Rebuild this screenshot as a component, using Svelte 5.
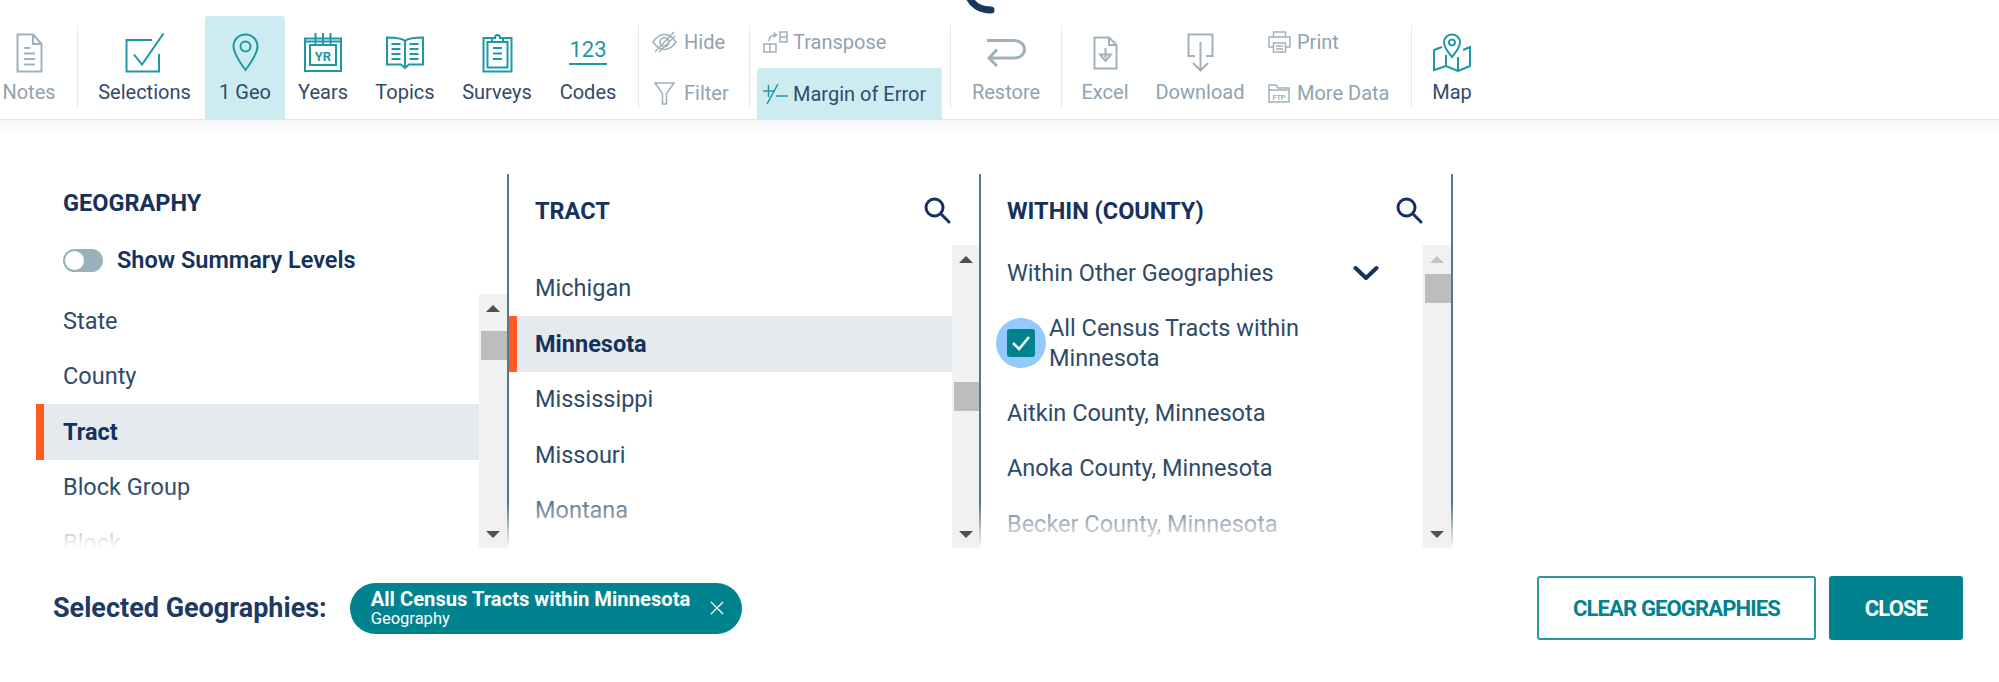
<script>
  const col1 = [
    { t: 'State' }, { t: 'County' }, { t: 'Tract', on: true }, { t: 'Block Group' }, { t: 'Block' }
  ];
  const col2 = [
    { t: 'Michigan' }, { t: 'Minnesota', on: true }, { t: 'Mississippi' }, { t: 'Missouri' }, { t: 'Montana' }
  ];
  const col3 = ['Aitkin County, Minnesota', 'Anoka County, Minnesota', 'Becker County, Minnesota'];
</script>

{#snippet scrollbar(offset, w, dim)}
  <div class="sb" style="width:{w}px">
    <span class="up" class:dim></span>
    <span class="thumb" style="margin-top:{offset}px"></span>
    <span class="down"></span>
  </div>
{/snippet}

{#snippet search()}
  <svg class="search" width="28" height="28" viewBox="0 0 28 28"><circle cx="11.5" cy="11.5" r="8.5"/><path d="M17.8 17.8 L26 26"/></svg>
{/snippet}

<svg class="arc" width="40" height="16" viewBox="0 0 40 16"><path d="M5 -3C8 4 15 10 27 10"/></svg>

<header class="bar">
  <div class="tool off notes">
    <span class="slot"><svg width="27" height="40" viewBox="0 0 27 40"><path d="M1.5 1.5H17L25.5 11V38.5H1.5ZM17 1.5V11H25.5M8 15H14M8 20.5H19M8 26H19M8 31.5H19"/></svg></span>
    <span class="lb">Notes</span>
  </div>
  <i class="sep first"></i>
  <div class="tool sel">
    <span class="slot"><svg width="40" height="40" viewBox="0 0 40 40"><path d="M27 7H1.5V38.5H34V21M9 21.5L17 31.5L38.5 0.5"/></svg></span>
    <span class="lb">Selections</span>
  </div>
  <div class="tool geo">
    <span class="slot"><svg width="27" height="39" viewBox="0 0 27 39"><path d="M13.5 1.5C6.5 1.5 1.5 7 1.5 13.5C1.5 21.5 13.5 37 13.5 37S25.5 21.5 25.5 13.5C25.5 7 20.5 1.5 13.5 1.5Z"/><circle cx="13.5" cy="13.5" r="5"/></svg></span>
    <span class="lb">1 Geo</span>
  </div>
  <div class="tool years">
    <span class="slot"><svg width="38" height="39" viewBox="0 0 38 39"><path d="M1 5.5H37V38H1ZM6 12H32V32H6ZM11.5 0V11M19 0V11M26.5 0V11M1 8.5H37"/><text x="19" y="27.5" text-anchor="middle">YR</text></svg></span>
    <span class="lb">Years</span>
  </div>
  <div class="tool topics">
    <span class="slot"><svg width="38" height="35" viewBox="0 0 38 35"><path d="M19 6C15 2.5 8 2.5 1 2.5V29.5H15L19 33L23 29.5H37V2.5C30 2.5 23 2.5 19 6ZM19 6V33M5.5 9H14.5M5.5 14H14.5M5.5 19H14.5M5.5 24H14.5M23.5 9H32.5M23.5 14H32.5M23.5 19H32.5M23.5 24H32.5"/></svg></span>
    <span class="lb">Topics</span>
  </div>
  <div class="tool surveys">
    <span class="slot"><svg width="31" height="40" viewBox="0 0 31 40"><path d="M10 5H1.5V38.5H29.5V5H21M5.5 9H25.5V34.5H5.5ZM10 9V5H13C13 1 18 1 18 5H21V9M11 15H20M11 20.5H20M11 26H20"/></svg></span>
    <span class="lb">Surveys</span>
  </div>
  <div class="tool codes">
    <span class="slot"><span class="num">123</span></span>
    <span class="lb">Codes</span>
  </div>
  <i class="sep s2"></i>
  <div class="stack st1">
    <div class="row off">
      <span class="ic"><svg width="25" height="22" viewBox="0 0 25 22"><path d="M1 11C5 5 9 3.5 12.5 3.5S20 5 24 11C20 17 16 18.5 12.5 18.5S5 17 1 11ZM12.5 6.5A4.5 4.5 0 1 1 12.4 6.5M3 21L22 1M7 21L23 5"/></svg></span>
      <span>Hide</span>
    </div>
    <div class="row off">
      <span class="ic"><svg width="21" height="23" viewBox="0 0 21 23"><path d="M1 1H20L12.5 11.5V22H8.5V11.5Z"/></svg></span>
      <span>Filter</span>
    </div>
  </div>
  <i class="sep"></i>
  <div class="stack st2">
    <div class="row off">
      <span class="ic"><svg width="25" height="22" viewBox="0 0 25 22"><path d="M1 13H13V21H1ZM7 13V21M17 1H24V11H17ZM17 6H24M6 10C6 6 8 4 13 4M10.5 1.5L13.5 4L10.5 6.5"/></svg></span>
      <span>Transpose</span>
    </div>
    <div class="row on">
      <span class="ic"><svg class="moe" width="25" height="20" viewBox="0 0 25 20"><path d="M0 7H11M5.5 1V13M4 20L15 0M13 12H25"/></svg></span>
      <span>Margin of Error</span>
    </div>
  </div>
  <i class="sep s3"></i>
  <div class="tool off restore">
    <span class="slot"><svg width="40" height="29" viewBox="0 0 40 29"><path class="thick" d="M1 2.5H28C34 2.5 38.5 6.5 38.5 11.5S34 20 28 20H4M11 11.5L3 20L11 28"/></svg></span>
    <span class="lb">Restore</span>
  </div>
  <i class="sep"></i>
  <div class="tool off excel">
    <span class="slot"><svg width="25" height="34" viewBox="0 0 25 34"><path d="M1.5 1.5H16L23.5 9V32.5H1.5ZM16 1.5V9H23.5M12.5 12V22M7 18.5H18L12.5 25Z"/></svg></span>
    <span class="lb">Excel</span>
  </div>
  <div class="tool off download">
    <span class="slot"><svg width="27" height="39" viewBox="0 0 27 39"><path d="M8 23H1.5V1.5H25.5V23H19M13.5 9V37.5M6 30L13.5 37.5L21 30"/></svg></span>
    <span class="lb">Download</span>
  </div>
  <div class="stack st3">
    <div class="row off">
      <span class="ic"><svg width="23" height="22" viewBox="0 0 23 22"><path d="M5.5 6V1H17.5V6M5.5 16H1V6H22V16H17.5M5.5 12H17.5V21H5.5ZM8 15H15M8 18H15"/></svg></span>
      <span>Print</span>
    </div>
    <div class="row off">
      <span class="ic"><svg width="22" height="19" viewBox="0 0 22 19"><path d="M1 18V1H8L10 4H21V18ZM1 6H21"/><text x="11" y="15.5" text-anchor="middle" class="ftp">FTP</text></svg></span>
      <span>More Data</span>
    </div>
  </div>
  <i class="sep"></i>
  <div class="tool map">
    <span class="slot"><svg width="38" height="39" viewBox="0 0 38 39"><path d="M19 1.5C14.5 1.5 11 5 11 9.5C11 14.5 19 24 19 24S27 14.5 27 9.5C27 5 23.5 1.5 19 1.5ZM19 6.5A3 3 0 1 1 18.9 6.5M9 14L1 17V37L13 33L25 38L37 33V14L30 17M13 22V33M25 24V38"/></svg></span>
    <span class="lb">Map</span>
  </div>
</header>
<div class="shade"></div>

<main class="cols">
  <section class="col c1">
    <div class="head1">
      <h2>GEOGRAPHY</h2>
      <div class="toggle"><span class="switch"><span class="knob"></span></span><b>Show Summary Levels</b></div>
    </div>
    <div class="listwrap">
      <div class="list">
        <ul class="shift">
          {#each col1 as r}<li class:on={r.on}>{r.t}</li>{/each}
        </ul>
        <span class="fade"></span>
      </div>
      {@render scrollbar(19, 28, false)}
    </div>
  </section>
  <section class="col c2">
    <div class="head2"><h2>TRACT</h2>{@render search()}</div>
    <div class="listwrap">
      <div class="list">
        <ul class="pad">
          {#each col2 as r}<li class:on={r.on}>{r.t}</li>{/each}
        </ul>
        <span class="fade"></span>
      </div>
      {@render scrollbar(119, 27, false)}
    </div>
  </section>
  <section class="col c3">
    <div class="head2"><h2>WITHIN (COUNTY)</h2>{@render search()}</div>
    <div class="listwrap">
      <div class="list">
        <ul>
          <li class="within"><span>Within Other Geographies</span><svg width="26" height="16" viewBox="0 0 26 16"><path d="M2.5 3L13 13L23.5 3"/></svg></li>
          <li class="check"><span class="ring"><span class="box"><svg width="20" height="16" viewBox="0 0 20 16"><path d="M2 8L8 14L18 2"/></svg></span></span><span class="cl">All Census Tracts within Minnesota</span></li>
          {#each col3 as t}<li>{t}</li>{/each}
        </ul>
        <span class="fade"></span>
      </div>
      {@render scrollbar(11, 28, true)}
    </div>
  </section>
</main>

<footer class="foot">
  <div class="selected">
    <strong>Selected Geographies:</strong>
    <div class="chip">
      <div class="ct"><b>All Census Tracts within Minnesota</b><small>Geography</small></div>
      <svg width="14" height="14" viewBox="0 0 14 14"><path d="M1 1L13 13M13 1L1 13"/></svg>
    </div>
  </div>
  <div class="btns">
    <button class="ghost">CLEAR GEOGRAPHIES</button>
    <button class="solid">CLOSE</button>
  </div>
</footer>

<style>
  :global(body) { margin: 0; background: #fff; font-family: Roboto, "Liberation Sans", sans-serif; overflow: hidden; }
  .arc { position: absolute; left: 964px; top: 0; fill: none; stroke: #17375e; stroke-width: 7; stroke-linecap: round; }
  .bar { display: flex; height: 119px; border-bottom: 1px solid #dfe7ec; color: #33496b; font-size: 20px; }
  .bar svg { fill: none; stroke: #1f98a5; stroke-width: 2; display: block; }
  .bar .off svg { stroke: #9fb1bb; }
  .bar .row svg { stroke-width: 1.5; }
  .sep { width: 1px; height: 84px; margin-top: 25px; background: #e5ebee; flex: none; }
  .sep.first { margin-left: 19px; }
  .sep.s2 { margin-left: 7px; }
  .sep.s3 { margin-left: 8px; }
  .tool { flex: none; display: flex; flex-direction: column; align-items: center; padding-top: 33px; box-sizing: border-box; }
  .slot { height: 39px; display: flex; align-items: center; justify-content: center; margin-bottom: 9px; }
  .lb { line-height: 22px; white-space: nowrap; }
  .off { color: #8fa3b0; }
  .notes { width: 58px; }
  .sel { width: 127px; padding-left: 6px; }
  .geo { width: 80px; background: #cdecf2; margin-top: 16px; padding-top: 17px; border-radius: 3px 3px 0 0; }
  .years { width: 76px; }
  .years text { font: 700 13px Roboto, sans-serif; fill: #1f98a5; stroke: none; }
  .topics { width: 88px; }
  .surveys { width: 96px; }
  .codes { width: 86px; }
  .num { color: #1f98a5; font-size: 22px; line-height: 20px; font-weight: 400; border-bottom: 2px solid #1f98a5; padding-bottom: 3px; }
  .stack { flex: none; padding-top: 16px; box-sizing: border-box; }
  .st1 { width: 110px; padding-left: 13px; }
  .st2 { width: 185px; margin-left: 7px; }
  .st3 { width: 159px; padding-left: 16px; }
  .row { height: 51.5px; display: flex; align-items: center; gap: 7px; white-space: nowrap; }
  .st2 .row { padding-left: 6px; gap: 5px; }
  .st3 .row { gap: 6px; }
  .row.on { background: #cdecf2; border-radius: 3px 3px 0 0; height: 52px; }
  .ic { width: 25px; display: flex; justify-content: center; flex: none; }
  .st3 .ic { width: 23px; justify-content: flex-start; }
  .moe { stroke: #1f98a5; }
  .ftp { font: 700 7px Roboto, sans-serif; fill: #9fb1bb; stroke: none; }
  .restore { width: 110px; }
  .bar .thick { stroke-width: 3; }
  .excel { width: 86px; }
  .download { width: 104px; }
  .map { width: 80px; }
  .shade { height: 14px; background: linear-gradient(#f4f5f6, #fff); }

  .cols { display: flex; height: 374px; margin-top: 40px; color: #2e4a69; font-size: 23.5px; }
  .col { flex: none; height: 374px; display: flex; flex-direction: column; box-sizing: border-box; border-right: 2px solid; border-image: linear-gradient(#5b7686 88%, #fff) 1; }
  .c1 { width: 509px; padding-left: 36px; }
  .c2 { width: 472px; }
  .c3 { width: 472px; }
  h2 { margin: 0; font-size: 23.5px; line-height: 24px; font-weight: 700; color: #16325c; }
  .head1 { height: 120px; flex: none; padding: 17px 0 0 27px; box-sizing: border-box; }
  .head2 { height: 71px; flex: none; display: flex; justify-content: space-between; align-items: center; padding: 2px 28px 0 26px; box-sizing: border-box; }
  .head2 .search { margin-top: -2px; }
  .toggle { display: flex; align-items: center; gap: 14px; margin-top: 33px; color: #16325c; font-size: 23.5px; line-height: 24px; }
  .toggle b { font-weight: 600; }
  .switch { width: 40px; height: 23px; border-radius: 12px; background: #9ab0bd; display: block; position: relative; }
  .knob { position: absolute; left: 2px; top: 2px; width: 19px; height: 19px; border-radius: 50%; background: #fff; }
  .search { fill: none; stroke: #16325c; stroke-width: 3; stroke-linecap: round; }
  .listwrap { flex: 1; min-height: 0; display: flex; }
  .list { flex: 1; min-width: 0; position: relative; overflow: hidden; }
  ul { list-style: none; margin: 0; padding: 0; }
  .shift { margin-top: -1px; }
  .pad { padding-top: 15.5px; }
  li { height: 55.5px; display: flex; align-items: center; padding-left: 26px; box-sizing: border-box; white-space: nowrap; }
  .c1 li { padding-left: 27px; }
  li.on { background: #e5eaee; box-shadow: inset 8px 0 0 #ff5a1f; color: #16325c; font-weight: 700; }
  .fade { position: absolute; left: 0; right: 0; bottom: 0; height: 60px; background: linear-gradient(rgba(255,255,255,0), #fff); }
  .within { justify-content: space-between; height: 56px; padding-right: 44px; }
  .within svg { fill: none; stroke: #16325c; stroke-width: 4; stroke-linecap: round; stroke-linejoin: round; }
  .check { height: 84px; white-space: normal; gap: 3px; padding-left: 15px; }
  .ring { width: 50px; height: 50px; border-radius: 50%; background: #93c9fb; flex: none; display: flex; align-items: center; justify-content: center; }
  .box { width: 28px; height: 28px; background: #00838f; border-radius: 3px; display: flex; align-items: center; justify-content: center; }
  .box svg { fill: none; stroke: #fff; stroke-width: 2.6; }
  .cl { width: 270px; line-height: 30px; }
  .sb { flex: none; background: #f1f1f1; display: flex; flex-direction: column; align-items: center; }
  .thumb { display: block; height: 29px; width: calc(100% - 2px); margin-left: 2px; background: #bdbdbd; }
  .up, .down { display: block; width: 0; height: 0; border-left: 7px solid transparent; border-right: 7px solid transparent; }
  .up { border-bottom: 7px solid #505050; margin-top: 11px; }
  .up.dim { border-bottom-color: #c4c4c4; }
  .down { border-top: 7px solid #505050; margin-top: auto; margin-bottom: 10px; }

  .foot { display: flex; justify-content: space-between; align-items: center; margin-top: 28px; padding: 0 36px 0 53px; height: 64px; }
  .selected { display: flex; align-items: center; gap: 23px; }
  .selected strong { font-size: 27px; font-weight: 700; color: #1d3a63; }
  .chip { width: 392px; height: 51px; box-sizing: border-box; border-radius: 26px; background: #00838f; color: #fff; display: flex; align-items: center; justify-content: space-between; padding: 0 18px 0 21px; }
  .ct { display: flex; flex-direction: column; }
  .ct b { font-size: 20.2px; line-height: 21px; font-weight: 700; }
  .ct small { font-size: 16.5px; line-height: 17px; }
  .chip svg { fill: none; stroke: #fff; stroke-width: 1.3; }
  .btns { display: flex; gap: 13px; }
  button { font: 700 22px Roboto, sans-serif; letter-spacing: -0.85px; height: 64px; border-radius: 3px; box-sizing: border-box; }
  .ghost { width: 279px; background: #fff; border: 2px solid #2b97a3; color: #00838f; }
  .solid { width: 134px; background: #00838f; border: 0; color: #fff; }
</style>
